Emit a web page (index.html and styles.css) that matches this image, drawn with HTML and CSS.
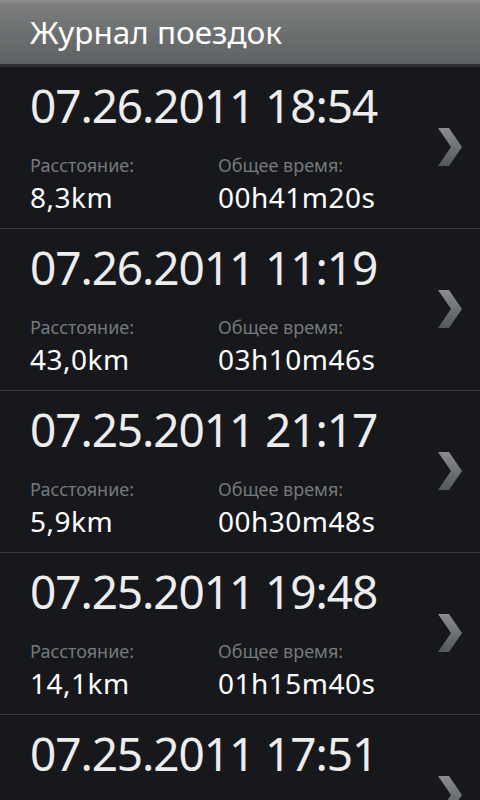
FILE: index.html
```html
<!DOCTYPE html>
<html lang="ru">
<head>
    <meta charset="UTF-8">
    <meta name="viewport" content="width=device-width, initial-scale=1.0">
    <title>Журнал поездок</title>
    <link rel="stylesheet" href="styles.css">
</head>
<body>
    <div class="titlebar">Журнал поездок</div>

    <ul class="trips">
        <li class="trip">
            <div class="info">
                <div class="date">07.26.2011 18:54</div>
                <div class="stats">
                    <div class="stat">
                        <div class="label">Расстояние:</div>
                        <div class="value">8,3km</div>
                    </div>
                    <div class="stat">
                        <div class="label">Общее время:</div>
                        <div class="value">00h41m20s</div>
                    </div>
                </div>
            </div>
            <svg class="chevron" width="26" height="40" viewBox="0 0 26 40"><defs><linearGradient id="cg" x1="0" y1="0" x2="0" y2="1"><stop offset="0" stop-color="#8a8c8e"/><stop offset="1" stop-color="#55585b"/></linearGradient></defs><polygon points="1,0 12,0 25,19 12,38 1,38 14,19" fill="url(#cg)"/></svg>
        </li>
        <li class="trip">
            <div class="info">
                <div class="date">07.26.2011 11:19</div>
                <div class="stats">
                    <div class="stat">
                        <div class="label">Расстояние:</div>
                        <div class="value">43,0km</div>
                    </div>
                    <div class="stat">
                        <div class="label">Общее время:</div>
                        <div class="value">03h10m46s</div>
                    </div>
                </div>
            </div>
            <svg class="chevron" width="26" height="40" viewBox="0 0 26 40"><polygon points="1,0 12,0 25,19 12,38 1,38 14,19" fill="url(#cg)"/></svg>
        </li>
        <li class="trip">
            <div class="info">
                <div class="date">07.25.2011 21:17</div>
                <div class="stats">
                    <div class="stat">
                        <div class="label">Расстояние:</div>
                        <div class="value">5,9km</div>
                    </div>
                    <div class="stat">
                        <div class="label">Общее время:</div>
                        <div class="value">00h30m48s</div>
                    </div>
                </div>
            </div>
            <svg class="chevron" width="26" height="40" viewBox="0 0 26 40"><polygon points="1,0 12,0 25,19 12,38 1,38 14,19" fill="url(#cg)"/></svg>
        </li>
        <li class="trip">
            <div class="info">
                <div class="date">07.25.2011 19:48</div>
                <div class="stats">
                    <div class="stat">
                        <div class="label">Расстояние:</div>
                        <div class="value">14,1km</div>
                    </div>
                    <div class="stat">
                        <div class="label">Общее время:</div>
                        <div class="value">01h15m40s</div>
                    </div>
                </div>
            </div>
            <svg class="chevron" width="26" height="40" viewBox="0 0 26 40"><polygon points="1,0 12,0 25,19 12,38 1,38 14,19" fill="url(#cg)"/></svg>
        </li>
        <li class="trip">
            <div class="info">
                <div class="date">07.25.2011 17:51</div>
            </div>
            <svg class="chevron" width="26" height="40" viewBox="0 0 26 40"><polygon points="1,0 12,0 25,19 12,38 1,38 14,19" fill="url(#cg)"/></svg>
        </li>
    </ul>
</body>
</html>
```

FILE: styles.css
```css
body {
    margin: 0;
    height: 800px;
    overflow: hidden;
    background-color: #16181c;
    font-family: "Noto Sans", "Open Sans", sans-serif;
    color: #f2f2f2;
}
.titlebar {
    height: 67px;
    box-sizing: border-box;
    padding-left: 30px;
    line-height: 64px;
    font-size: 31.5px;
    color: #fff;
    background: linear-gradient(#8a8c8d 0, #8a8c8d 2px, #7b7d7e 3px, #5e6163 100%);
    border-bottom: 3px solid #2c2e30;
}
.trips {
    list-style: none;
    margin: 0;
    padding: 0;
}
.trip {
    height: 162px;
    box-sizing: border-box;
    display: flex;
    align-items: center;
    padding: 0 17px 0 30px;
    border-bottom: 1px solid #3a3b3a;
}
.info {
    flex: 1;
    align-self: flex-start;
}
.date {
    font-size: 46px;
    line-height: 50px;
    letter-spacing: -1.1px;
    margin-top: 13px;
    color: #ededed;
}
.stats {
    display: flex;
    margin-top: 24px;
}
.stat {
    width: 188px;
}
.label {
    font-size: 18px;
    line-height: 22px;
    color: #77787a;
}
.value {
    font-size: 28px;
    line-height: 32px;
    margin-top: 5px;
    letter-spacing: 0.5px;
    color: #fff;
}
.chevron {
    display: block;
}
```
